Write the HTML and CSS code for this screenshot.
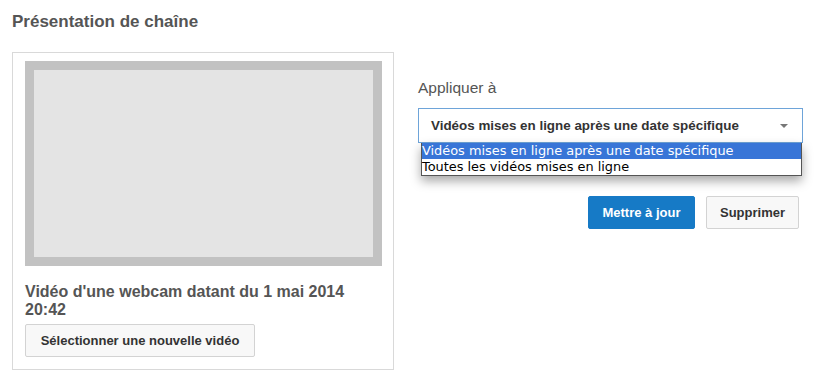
FILE: index.html
```html
<!DOCTYPE html>
<html lang="fr">
<head>
<meta charset="utf-8">
<title>Présentation de chaîne</title>
<link rel="stylesheet" href="styles.css">
</head>
<body>
<div class="page">
  <h1 class="title">Présentation de chaîne</h1>
  <div class="row">
    <div class="panel">
      <div class="thumb"><div class="thumb-inner"></div></div>
      <div class="video-title">Vidéo d'une webcam datant du 1 mai 2014 20:42</div>
      <button class="btn btn-default btn-select">Sélectionner une nouvelle vidéo</button>
    </div>
    <div class="side">
      <div class="label">Appliquer à</div>
      <div class="select-wrap">
        <div class="select">
          <span>Vidéos mises en ligne après une date spécifique</span>
          <span class="arrow"></span>
        </div>
        <ul class="menu">
          <li class="active">Vidéos mises en ligne après une date spécifique</li>
          <li>Toutes les vidéos mises en ligne</li>
        </ul>
      </div>
      <div class="actions">
        <button class="btn btn-primary">Mettre à jour</button>
        <button class="btn btn-default">Supprimer</button>
      </div>
    </div>
  </div>
</div>
</body>
</html>
```

FILE: styles.css
```css
html, body {
  margin: 0;
  padding: 0;
  background: #fff;
}
body {
  font-family: "Liberation Sans", Arial, sans-serif;
  color: #555;
}
.page {
  padding: 12px 0 0 12px;
}
.title {
  margin: 0;
  font-size: 17px;
  line-height: 20px;
  font-weight: bold;
  color: #555;
}
.row {
  display: flex;
  align-items: flex-start;
  margin-top: 20px;
}
.panel {
  width: 357px;
  border: 1px solid #d9d9d9;
  padding: 8px 11px 12px 12px;
}
.thumb {
  height: 205px;
  background: #c2c2c2;
  padding: 9px;
  box-sizing: border-box;
}
.thumb-inner {
  height: 100%;
  background: #e4e4e4;
}
.video-title {
  margin-top: 17px;
  font-size: 16px;
  line-height: 18px;
  font-weight: bold;
  color: #555;
  width: 340px;
}
.btn {
  font-family: "Liberation Sans", Arial, sans-serif;
  font-weight: bold;
  font-size: 13px;
  height: 33px;
  border-radius: 2px;
  padding: 0 10px;
  cursor: pointer;
}
.btn-default {
  background: #f8f8f8;
  border: 1px solid #d3d3d3;
  color: #333;
}
.btn-primary {
  background: #167ac6;
  border: 1px solid #167ac6;
  color: #fff;
}
.btn-select {
  margin-top: 5px;
  width: 230px;
}
.side {
  margin-left: 24px;
  width: 385px;
}
.label {
  margin-top: 27px;
  font-size: 15.5px;
  line-height: 18px;
  color: #555;
}
.select-wrap {
  position: relative;
  margin-top: 11px;
}
.select {
  height: 35px;
  box-sizing: border-box;
  border: 1px solid #6ea4d9;
  display: flex;
  align-items: center;
  justify-content: space-between;
  padding: 0 14px 0 12px;
  font-size: 13.4px;
  font-weight: bold;
  color: #333;
  background: #fff;
}
.arrow {
  width: 0;
  height: 0;
  border-left: 4px solid transparent;
  border-right: 4px solid transparent;
  border-top: 4px solid #777;
}
.menu {
  position: absolute;
  top: 35px;
  left: 3px;
  width: 381px;
  box-sizing: border-box;
  margin: 0;
  padding: 0;
  list-style: none;
  background: #fff;
  border: 1px solid #555;
  border-top: none;
  box-shadow: 0 5px 10px rgba(0, 0, 0, 0.35);
  font-family: "DejaVu Sans", sans-serif;
  font-size: 12.9px;
  color: #000;
}
.menu li {
  height: 16px;
  line-height: 16px;
  padding-left: 0;
  white-space: nowrap;
}
.menu li.active {
  background: #3875d7;
  color: #fff;
}
.actions {
  display: flex;
  justify-content: flex-end;
  gap: 11px;
  margin-top: 53px;
  padding-right: 4px;
}
.actions .btn-primary {
  width: 107px;
}
.actions .btn-default {
  width: 93px;
}
```
